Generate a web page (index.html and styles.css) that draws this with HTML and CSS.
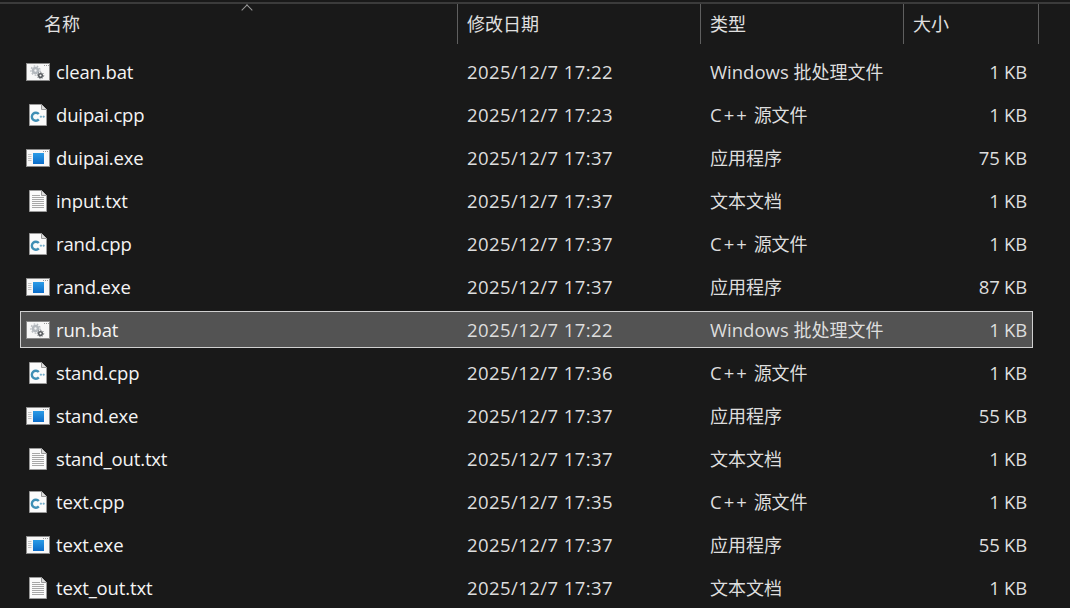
FILE: index.html
```html
<!DOCTYPE html>
<html lang="zh-CN">
<head>
    <meta charset="UTF-8">
    <title>文件列表</title>
    <link rel="stylesheet" href="styles.css">
</head>
<body>
    <svg class="icon-defs" width="0" height="0">
        <defs>
            <linearGradient id="exe-blue" x1="0" y1="0" x2="0" y2="1">
                <stop offset="0" stop-color="#2a9be6"/>
                <stop offset="1" stop-color="#0b6cc9"/>
            </linearGradient>
            <symbol id="icon-bat" viewBox="0 0 24 18">
                <rect x="0.5" y="0.5" width="23" height="17" fill="#f7f7f7" stroke="#8a8a8a"/>
                <path d="M18 2.5h1M20 2.5h1M22 2.5h1" stroke="#9a9a9a"/>
                <circle cx="9.5" cy="7.5" r="2.5" fill="none" stroke="#b4b9be" stroke-width="2.6"/>
                <circle cx="9.5" cy="7.5" r="4.6" fill="none" stroke="#b4b9be" stroke-width="1.2" stroke-dasharray="1.6 1.6"/>
                <circle cx="14.5" cy="12.5" r="1.8" fill="none" stroke="#55595d" stroke-width="1.5"/>
                <circle cx="14.5" cy="12.5" r="3.2" fill="none" stroke="#55595d" stroke-width="0.9" stroke-dasharray="1.2 1.2"/>
            </symbol>
            <symbol id="icon-cpp" viewBox="0 0 18 22">
                <path d="M0.5 0.5H12.5L17.5 5.5V21.5H0.5Z" fill="#fbfbfb" stroke="#9a9a9a"/>
                <path d="M12.5 0.5V5.5H17.5" fill="#dcdcdc" stroke="#9a9a9a"/>
                <path d="M9.8 10A4 4 0 1 0 9.8 15.4" fill="none" stroke="#3f8fb5" stroke-width="2.4"/>
                <path d="M10.8 12.7h2.2M11.9 11.6v2.2M13.6 12.7h2.2M14.7 11.6v2.2" stroke="#6aa8c6" stroke-width="0.9"/>
            </symbol>
            <symbol id="icon-exe" viewBox="0 0 24 18">
                <rect x="0.5" y="0.5" width="23" height="17" fill="#f7f7f7" stroke="#8a8a8a"/>
                <path d="M17 2.5h1M19 2.5h1M21 2.5h1" stroke="#9a9a9a"/>
                <path d="M2 5.5h3.5M2 7.5h3.5M2 9.5h3.5M2 11.5h3.5" stroke="#c4c4c4"/>
                <rect x="7" y="4" width="11" height="11" fill="url(#exe-blue)"/>
            </symbol>
            <symbol id="icon-txt" viewBox="0 0 18 22">
                <path d="M0.5 0.5H12.5L17.5 5.5V21.5H0.5Z" fill="#fbfbfb" stroke="#9a9a9a"/>
                <path d="M12.5 0.5V5.5H17.5" fill="#dcdcdc" stroke="#9a9a9a"/>
                <path d="M3 5.5h8M3 7.5h12M3 9.5h12M3 11.5h12M3 13.5h12M3 15.5h12M3 17.5h12" stroke="#a8a8a8"/>
            </symbol>
        </defs>
    </svg>

    <div class="top-line"></div>

    <div class="header">
        <div class="col-head col-head-name">名称<span class="sort-arrow"></span></div>
        <div class="col-head">修改日期</div>
        <div class="col-head">类型</div>
        <div class="col-head">大小</div>
    </div>

    <div class="file-list">
        <div class="row">
            <div class="name"><span class="icon-box"><svg class="icon-wide"><use href="#icon-bat"/></svg></span>clean.bat</div>
            <div class="date">2025/12/7 17:22</div><div class="type">Windows <span class="zh">批处理文件</span></div><div class="size">1 KB</div>
        </div>
        <div class="row">
            <div class="name"><span class="icon-box"><svg class="icon-doc"><use href="#icon-cpp"/></svg></span>duipai.cpp</div>
            <div class="date">2025/12/7 17:23</div><div class="type"><span class="cpp">C++</span> <span class="zh">源文件</span></div><div class="size">1 KB</div>
        </div>
        <div class="row">
            <div class="name"><span class="icon-box"><svg class="icon-wide"><use href="#icon-exe"/></svg></span>duipai.exe</div>
            <div class="date">2025/12/7 17:37</div><div class="type"><span class="zh">应用程序</span></div><div class="size">75 KB</div>
        </div>
        <div class="row">
            <div class="name"><span class="icon-box"><svg class="icon-doc"><use href="#icon-txt"/></svg></span>input.txt</div>
            <div class="date">2025/12/7 17:37</div><div class="type"><span class="zh">文本文档</span></div><div class="size">1 KB</div>
        </div>
        <div class="row">
            <div class="name"><span class="icon-box"><svg class="icon-doc"><use href="#icon-cpp"/></svg></span>rand.cpp</div>
            <div class="date">2025/12/7 17:37</div><div class="type"><span class="cpp">C++</span> <span class="zh">源文件</span></div><div class="size">1 KB</div>
        </div>
        <div class="row">
            <div class="name"><span class="icon-box"><svg class="icon-wide"><use href="#icon-exe"/></svg></span>rand.exe</div>
            <div class="date">2025/12/7 17:37</div><div class="type"><span class="zh">应用程序</span></div><div class="size">87 KB</div>
        </div>
        <div class="row selected">
            <div class="name"><span class="icon-box"><svg class="icon-wide"><use href="#icon-bat"/></svg></span>run.bat</div>
            <div class="date">2025/12/7 17:22</div><div class="type">Windows <span class="zh">批处理文件</span></div><div class="size">1 KB</div>
        </div>
        <div class="row">
            <div class="name"><span class="icon-box"><svg class="icon-doc"><use href="#icon-cpp"/></svg></span>stand.cpp</div>
            <div class="date">2025/12/7 17:36</div><div class="type"><span class="cpp">C++</span> <span class="zh">源文件</span></div><div class="size">1 KB</div>
        </div>
        <div class="row">
            <div class="name"><span class="icon-box"><svg class="icon-wide"><use href="#icon-exe"/></svg></span>stand.exe</div>
            <div class="date">2025/12/7 17:37</div><div class="type"><span class="zh">应用程序</span></div><div class="size">55 KB</div>
        </div>
        <div class="row">
            <div class="name"><span class="icon-box"><svg class="icon-doc"><use href="#icon-txt"/></svg></span>stand_out.txt</div>
            <div class="date">2025/12/7 17:37</div><div class="type"><span class="zh">文本文档</span></div><div class="size">1 KB</div>
        </div>
        <div class="row">
            <div class="name"><span class="icon-box"><svg class="icon-doc"><use href="#icon-cpp"/></svg></span>text.cpp</div>
            <div class="date">2025/12/7 17:35</div><div class="type"><span class="cpp">C++</span> <span class="zh">源文件</span></div><div class="size">1 KB</div>
        </div>
        <div class="row">
            <div class="name"><span class="icon-box"><svg class="icon-wide"><use href="#icon-exe"/></svg></span>text.exe</div>
            <div class="date">2025/12/7 17:37</div><div class="type"><span class="zh">应用程序</span></div><div class="size">55 KB</div>
        </div>
        <div class="row">
            <div class="name"><span class="icon-box"><svg class="icon-doc"><use href="#icon-txt"/></svg></span>text_out.txt</div>
            <div class="date">2025/12/7 17:37</div><div class="type"><span class="zh">文本文档</span></div><div class="size">1 KB</div>
        </div>
    </div>
</body>
</html>
```

FILE: styles.css
```css
* {
    box-sizing: border-box;
    margin: 0;
    padding: 0;
}

html, body {
    height: 100%;
    overflow: hidden;
}

body {
    background-color: #191919;
    color: #dedede;
    font-family: 'Open Sans', 'Noto Sans CJK SC', sans-serif;
    font-size: 18.5px;
    line-height: 24px;
    padding-top: 2px;
}

.icon-defs {
    position: absolute;
}

.top-line {
    height: 2px;
    background-color: #3b3b3b;
}

.header {
    display: grid;
    grid-template-columns: 458px 243px 203px 135px;
    height: 40px;
}

.col-head {
    position: relative;
    display: flex;
    align-items: center;
    padding-left: 9px;
    border-right: 1px solid #5f5f5f;
    color: #e0e0e0;
    font-size: 18px;
}

.col-head-name {
    padding-left: 44px;
}

.sort-arrow {
    position: absolute;
    left: 241px;
    top: 2px;
    width: 8px;
    height: 8px;
    margin-left: 1.5px;
    border-top: 1px solid #9a9a9a;
    border-left: 1px solid #9a9a9a;
    transform: rotate(45deg);
}

.file-list {
    margin: 9px 37px 0 20px;
}

.row {
    display: grid;
    grid-template-columns: 446px 243px 203px 114px;
    align-items: center;
    height: 37px;
    margin-bottom: 6px;
    border: 1px solid transparent;
}

.row > .name {
    margin-left: -1px;
}

.selected {
    background-color: #535353;
    border-color: #d0d0d0;
}

.name {
    display: flex;
    align-items: center;
    color: #f4f4f4;
    letter-spacing: -0.15px;
}

.icon-box {
    display: flex;
    justify-content: center;
    align-items: center;
    width: 36px;
}

.icon-wide {
    width: 24px;
    height: 18px;
}

.icon-doc {
    width: 18px;
    height: 22px;
}

/* segoe digits run wider than open sans */
.date {
    letter-spacing: 0.43px;
}

.zh {
    font-size: 18px;
}

.cpp {
    letter-spacing: 2px;
}

.size {
    text-align: right;
    letter-spacing: -0.2px;
}
```
